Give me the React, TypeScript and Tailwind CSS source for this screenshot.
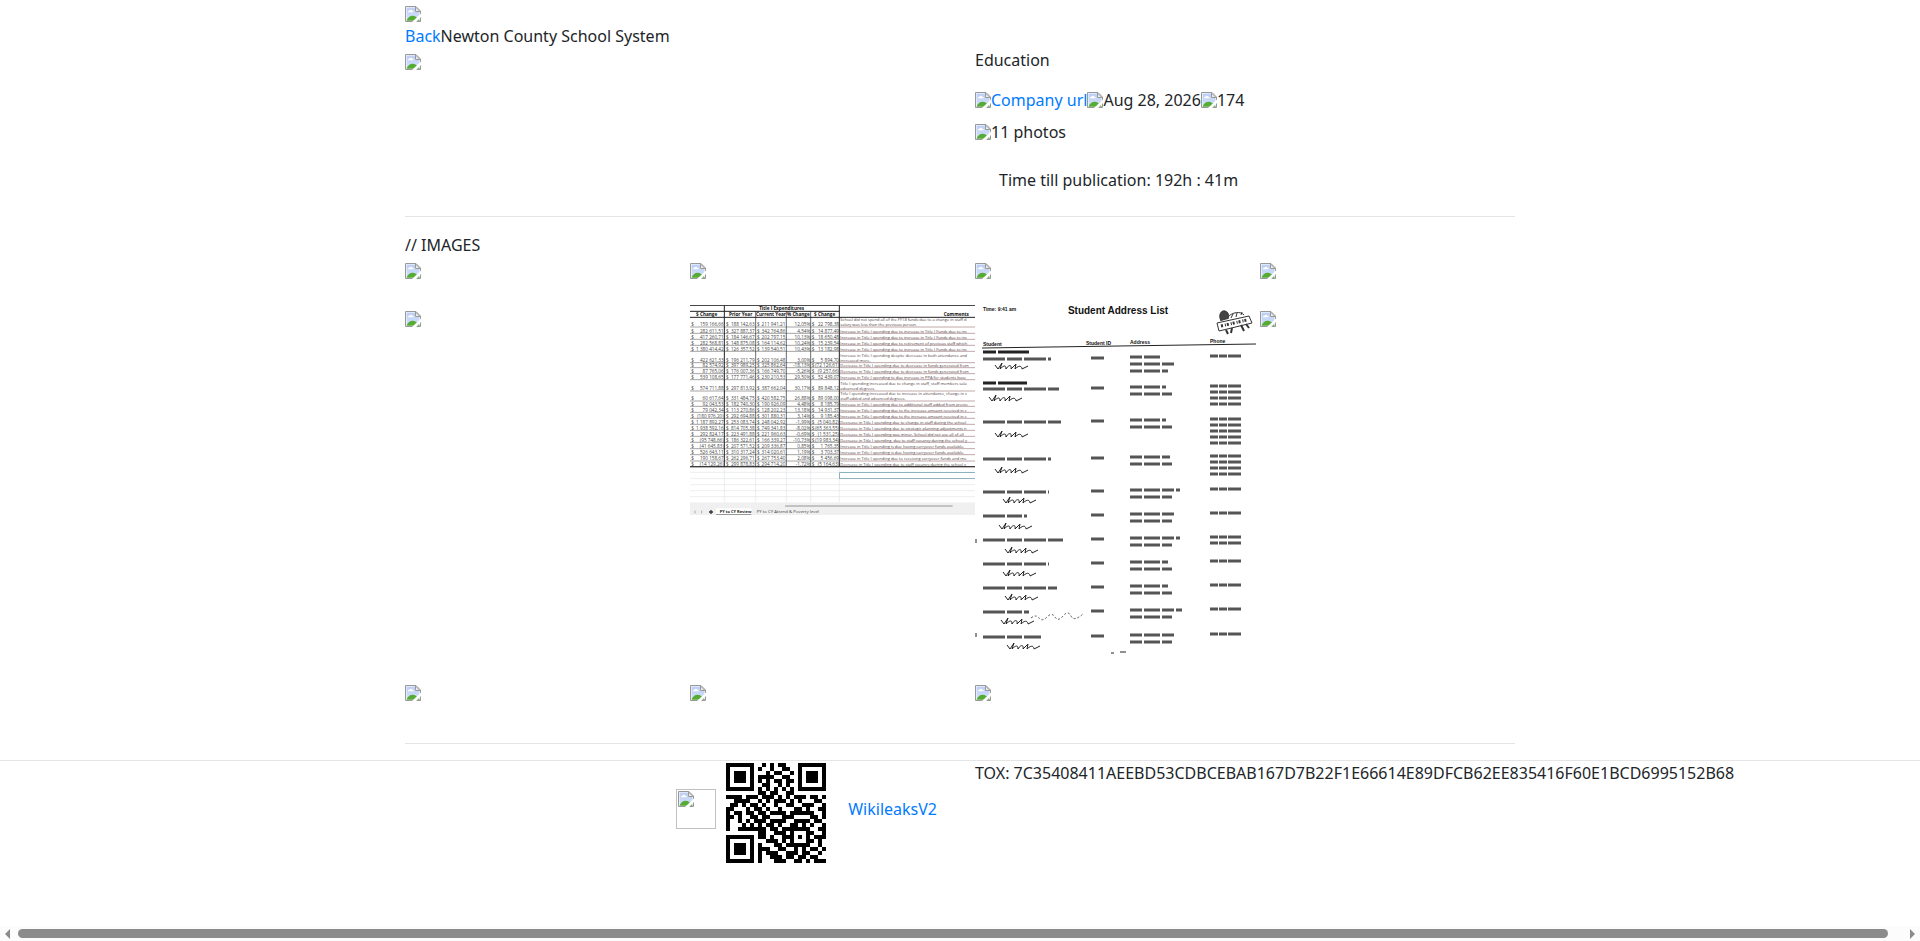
const GALLERY: string[][] = [
  ["broken", "broken", "broken", "broken"],
  ["broken", "sheet", "list", "broken"],
  ["broken", "broken", "broken"],
];

const SHEET_ROWS = [
  { y: 105, a: "159 166,66", b: "188 142,63", c: "211 941,21", d: "12,05%", e: "22 798,38", t: ["School did not spend all of the FY18 funds due to a change in staff d", "salary was less than the previous person."] },
  { y: 124, a: "282 611,51", b: "327 887,37", c: "342 764,86", d: "4,54%", e: "14 877,49", t: ["Increase in Title I spending due to increase in Title I Funds due to inc"] },
  { y: 142, a: "417 260,71", b: "184 146,67", c: "202 797,15", d: "10,13%", e: "18 650,48", t: ["Increase in Title I spending due to increase in Title I Funds due to inc"] },
  { y: 160, a: "282 568,81", b: "148 875,08", c: "164 114,62", d: "10,24%", e: "15 239,54", t: ["Increase in Title I spending due to retirement of previous staff which"] },
  { y: 178, a: "1 380 414,42", b: "126 357,52", c: "139 540,51", d: "10,43%", e: "13 182,98", t: ["Increase in Title I spending due to increase in Title I Funds due to inc"] },
  { y: 212, a: "422 621,33", b: "196 211,79", c: "202 106,48", d: "3,00%", e: "5 894,70", t: ["Increase in Title I spending despite decrease in both attendance and", "increased more."] },
  { y: 227, a: "82 574,92", b: "397 989,25", c: "325 862,64", d: "-18,13%", e: "(72 126,61)", t: ["Decrease in Title I spending due to decrease in funds generated from"] },
  { y: 245, a: "87 765,06", b: "176 007,36", c: "166 749,70", d: "-5,26%", e: "(9 257,66)", t: ["Decrease in Title I spending due to decrease in funds generated from"] },
  { y: 263, a: "539 108,65", b: "177 771,46", c: "230 210,53", d: "29,50%", e: "52 439,07", t: ["Increase in Title I spending to due increase in PPA for students base"] },
  { y: 297, a: "574 711,88", b: "297 813,92", c: "387 662,04", d: "30,17%", e: "89 848,12", t: ["Title I spending increased due to change in staff, staff members sala", "advanced degrees."] },
  { y: 327, a: "60 617,64", b: "331 484,75", c: "420 582,75", d: "26,88%", e: "89 098,00", t: ["Title I spending increased due to increase in attendance, change in s", "staff added and advanced degrees."] },
  { y: 343, a: "92 043,53", b: "182 740,30", c: "190 926,09", d: "4,48%", e: "8 185,79", t: ["Increase in Title I spending due to additional staff added from previo"] },
  { y: 361, a: "79 042,34", b: "113 270,86", c: "128 202,23", d: "13,18%", e: "14 931,37", t: ["Increase in Title I spending due to the increase amount received in c"] },
  { y: 379, a: "(180 976,20)", b: "292 694,88", c: "301 880,31", d: "3,14%", e: "9 185,43", t: ["Increase in Title I spending due to the increase amount received in c"] },
  { y: 397, a: "1 187 892,27", b: "253 083,74", c: "248 042,92", d: "-1,99%", e: "(5 040,82)", t: ["Decrease in Title I spending due to change in staff during the school"] },
  { y: 415, a: "1 938 592,16", b: "814 705,38", c: "749 341,83", d: "-8,02%", e: "(65 363,55)", t: ["Decrease in Title I spending due to strategic planning adjustments n"] },
  { y: 433, a: "292 824,17", b: "223 491,88", c: "221 960,63", d: "-0,69%", e: "(1 531,25)", t: ["Decrease in Title I spending was minor.  School did not use all of all"] },
  { y: 451, a: "(95 748,66)", b: "186 322,61", c: "166 339,27", d: "-10,73%", e: "(19 983,34)", t: ["Decrease in Title I spending, due to staff vacancy during the school y"] },
  { y: 470, a: "(41 645,83)", b: "207 571,52", c: "209 336,87", d: "0,85%", e: "1 765,35", t: ["Increase in Title I spending is due having carryover funds available."] },
  { y: 488, a: "526 643,11", b: "310 317,24", c: "314 020,61", d: "1,19%", e: "3 703,37", t: ["Increase in Title I spending is due having carryover funds available."] },
  { y: 507, a: "190 158,67", b: "262 296,71", c: "267 753,40", d: "2,08%", e: "5 456,69", t: ["Increase in Title I spending due to receiving carryover funds and mo"] },
  { y: 525, a: "(14 129,26)", b: "299 878,83", c: "294 714,20", d: "-1,72%", e: "(5 164,63)", t: ["Decrease in Title I spending due to staff vacancy during the school y"] },
];

// y of the entry, lines in the name / address / phone columns, note position
const LIST_ROWS = [
  { y: 53, name: 68, addr: [30, 46, 38], phone: 1, note: [12, 60] },
  { y: 83, name: 76, addr: [36, 42], phone: 4, note: [6, 92] },
  { y: 116, name: 78, addr: [36, 42], phone: 5, note: [12, 128] },
  { y: 153, name: 68, addr: [40, 42], phone: 4, note: [12, 164] },
  { y: 186, name: 66, addr: [50, 42], phone: 1, note: [20, 194] },
  { y: 210, name: 44, addr: [44, 42], phone: 1, note: [16, 220] },
  { y: 234, name: 80, addr: [50, 42], phone: 2, note: [22, 244] },
  { y: 258, name: 66, addr: [38, 42], phone: 1, note: [20, 267] },
  { y: 282, name: 74, addr: [38, 42], phone: 1, note: [22, 291] },
  { y: 306, name: 46, addr: [52, 42], phone: 1, note: [18, 315] },
  { y: 331, name: 58, addr: [46, 42], phone: 1, note: [24, 340] },
];

const CODE = [
  "1111111001010110001111111",
  "1000001010010011001000001",
  "1011101000101100101011101",
  "1011101011110011001011101",
  "1011101010101101101011101",
  "1000001001100101001000001",
  "1111111010101010101111111",
  "0000000011011001100000000",
  "1111011101110101011101101",
  "0011110010101110101000110",
  "0110101101001001100111001",
  "1100010110100100011010011",
  "1011011011011110111111001",
  "1101001101100011100001101",
  "1001010111011110011110110",
  "1000101010110100110101001",
  "1001111111011011111110011",
  "0000000011001110100011001",
  "1111111011010011101010111",
  "1000001000111010100011010",
  "1011101010001101111110010",
  "1011101011100110010101101",
  "1011101010111001110110010",
  "1000001010011101101101100",
  "1111111010001110011010111",
];

function BrokenImage() {
  return (
    <svg viewBox="0 0 16 16" className="size-4 shrink-0" aria-hidden="true">
      <defs>
        <linearGradient id="sky" x1="0" y1="0" x2="0" y2="1">
          <stop offset="0" stopColor="#bccff5" />
          <stop offset="1" stopColor="#d3e0fa" />
        </linearGradient>
      </defs>
      <path d="M.5.5h10.500l4.500 4.500v10.500H.5z" fill="#fff" stroke="#999" />
      <path d="M1.500 1.500H10v4.500h4.500v8.500h-13z" fill="url(#sky)" />
      <path d="M3 6.200c-.1-1.200.8-1.700 1.500-1.500.4-1.400 2.300-1.400 2.700 0 1-.2 1.600.6 1.500 1.500z" fill="#fff" />
      <path d="M1.500 14.800c1.300-3.300 3.500-5 6-5 2.800 0 5.500 2 7.500 5z" fill="#56ab34" />
      <path d="M10.500 1v4.500H15z" fill="#eee" stroke="#999" />
      <path d="M16 7.500v3.500L11.500 15.500V16H7z" fill="#fff" />
    </svg>
  );
}

function SheetThumb() {
  return (
    <svg viewBox="30 45 855 630" className="w-full" fontFamily="Open Sans, sans-serif" fontSize="14" fill="#444" role="img" aria-label="Spreadsheet">
      <g stroke="#e3e6ea" strokeWidth="2">
        <path d="M30 547H885M30 566H885M30 584H885M30 602H885M30 620H885" />
        <path d="M133 530V636M227 530V636M319 530V636M392 530V636M478 530V636" />
      </g>
      <g fontWeight="700" fontSize="14" fill="#111" textAnchor="middle">
        <text x="305" y="60">Title I Expenditures</text>
        <text x="80" y="79">$ Change</text>
        <text x="182" y="79">Prior Year</text>
        <text x="273" y="79">Current Year</text>
        <text x="355" y="79">% Change</text>
        <text x="434" y="79">$ Change</text>
        <text x="829" y="79">Comments</text>
      </g>
      {SHEET_ROWS.map((r) => (
        <g key={r.y}>
          <text x="34" y={r.y + 4}>$</text>
          <text x="131" y={r.y + 4} textAnchor="end">{r.a}</text>
          <text x="138" y={r.y + 4}>$</text>
          <text x="224" y={r.y + 4} textAnchor="end">{r.b}</text>
          <text x="231" y={r.y + 4}>$</text>
          <text x="316" y={r.y + 4} textAnchor="end">{r.c}</text>
          <text x="391" y={r.y + 4} textAnchor="end">{r.d}</text>
          <text x="395" y={r.y + 4}>$</text>
          <text x="477" y={r.y + 4} textAnchor="end">{r.e}</text>
          {r.t.map((line, i) => (
            <text key={line} x="481" y={r.y + 4 - (r.t.length - 1 - i) * 15} fontSize="12" fill="#4c3a3c">
              {line}
            </text>
          ))}
          <path d={`M30 ${r.y + 6}H478`} stroke="#777" strokeWidth="2" />
          <path d={`M480 ${r.y + 6}H885`} stroke="#a07c80" strokeWidth="2" />
        </g>
      ))}
      <g stroke="#222" strokeWidth="3" fill="none">
        <path d="M30 46H885M30 64H478M30 82H885M30 530H885" />
        <path d="M133 46V530M478 46V530" />
        <path d="M227 64V530M319 64V530M392 64V530" strokeWidth="2" />
      </g>
      <rect x="479" y="548" width="420" height="18" fill="#fff" stroke="#5a8fa3" strokeWidth="2" />
      <rect x="30" y="637" width="855" height="38" fill="#f0f0f0" />
      <path d="M315 648H818" stroke="#b5b5b5" strokeWidth="5" />
      <path d="M108 655h106v20H108z" fill="#fff" />
      <path d="M108 675H214" stroke="#333" strokeWidth="3" />
      <path d="M87 666h12M93 660v12" stroke="#333" strokeWidth="4" />
      <path d="M45 662v8M65 662v8" stroke="#aaa" strokeWidth="3" />
      <text x="119" y="670" fontSize="12" fontWeight="700" fill="#222">PY to CY Review</text>
      <text x="230" y="670" fontSize="13">PY to CY Attend &amp; Poverty level</text>
    </svg>
  );
}

function ListThumb() {
  return (
    <svg viewBox="0 0 285 350" className="w-full" fontFamily="Liberation Sans, sans-serif" fontWeight="700" fill="#111" role="img" aria-label="Student Address List">
      <text x="143" y="9" fontSize="10" textAnchor="middle">Student Address List</text>
      <g fontSize="5">
        <text x="8" y="6">Time: 9:41 am</text>
        <text x="8" y="41">Student</text>
        <text x="111" y="40">Student ID</text>
        <text x="155" y="39">Address</text>
        <text x="235" y="38">Phone</text>
      </g>
      <path d="M7 43L281 39" stroke="#222" fill="none" />
      <g stroke="#333" fill="none">
        <path d="M242 18l32-7 3 7-33 8z" fill="#fff" />
        <path d="M246 16c-3-6 0-11 4-10s4 5 3 8" fill="#444" />
        <path d="M253 12c4-5 13-6 16-2M256 13l2-4M261 12l1-4M266 10l1-3" />
        <path d="M246 21l26-6" strokeWidth="3" strokeDasharray="2 2 1 1" />
        <path d="M251 25l2 4M257 23l-1 5M266 20l3 6M271 19l3 4" strokeWidth="2" />
      </g>
      {/* entries are masked: only the shape of the lines is drawn */}
      <g stroke="#555" strokeWidth="3" fill="none">
        <path d="M8 47h46M8 78h44" stroke="#222" strokeDasharray="13 2 31" />
        {LIST_ROWS.map((r) => (
          <g key={r.y}>
            <path d={`M8 ${r.y + 1}h${r.name}`} strokeDasharray="22 2 15 2" />
            <path d={`M116 ${r.y}h13`} />
            {r.addr.map((w, i) => (
              <path key={i} d={`M155 ${r.y - 1 + i * 7}h${w}`} strokeDasharray="12 2 16 2" />
            ))}
            {Array.from({ length: r.phone }, (_, i) => (
              <path key={i} d={`M235 ${r.y - 2 + i * 6}h31`} strokeDasharray="8 1 8 1 13" />
            ))}
            <path
              d={`M${r.note[0] + 8} ${r.note[1]}l3 4 4-6-2 6c4-4 6-4 6 0 3-5 6-4 5 0l5-5-1 5c5-5 7-2 7 0l6-3`}
              stroke="#222"
              strokeWidth="1"
            />
          </g>
        ))}
        <path d="M56 313q5-4 8 0t8-1 8 0 8-1 8 0 12-2" strokeWidth="1" strokeDasharray="2 2" />
      </g>
      <path d="M1 234v4M1 328v4M136 348h3M145 347h6" stroke="#222" />
    </svg>
  );
}

function Thumb({ kind }: { kind: string }) {
  if (kind === "sheet") return <SheetThumb />;
  if (kind === "list") return <ListThumb />;
  return (
    <div className="flex h-6 items-end pb-0.5">
      <BrokenImage />
    </div>
  );
}

function CodeImage() {
  return (
    <svg viewBox="0 0 25 25" className="size-[100px]" shapeRendering="crispEdges" role="img" aria-label="Code">
      {CODE.map((row, y) =>
        row.split("").map((c, x) => c === "1" && <rect key={`${x}-${y}`} x={x} y={y} width="1" height="1" />)
      )}
    </svg>
  );
}

function App() {
  return (
    <div className="flex min-h-screen flex-col overflow-x-hidden bg-white font-['Noto_Sans',sans-serif] text-base text-[#212529]">
      <main className="mx-auto w-full max-w-[1140px] px-[15px]">
        <Thumb kind="broken" />
        <div>
          <a href="#" className="text-[#007bff]">Back</a>Newton County School System
        </div>
        <div className="grid grid-cols-2 gap-[30px]">
          <Thumb kind="broken" />
          <div>
            <div>Education</div>
            <div className="mt-4 flex items-center">
              <BrokenImage />
              <a href="#" className="text-[#007bff]">Company url</a>
              <BrokenImage />
              <span>Aug 28, 2026</span>
              <BrokenImage />
              <span>174</span>
            </div>
            <div className="mt-2 flex items-center">
              <BrokenImage />
              <span>11 photos</span>
            </div>
            <div className="p-6">Time till publication: 192h : 41m</div>
          </div>
        </div>
        <hr className="mb-4 border-black/10" />
        <div>// IMAGES</div>
        {GALLERY.map((row, i) => (
          <div key={i} className="-mr-[30px] grid grid-cols-4 pb-6">
            {row.map((kind, j) => (
              <Thumb key={j} kind={kind} />
            ))}
          </div>
        ))}
        <hr className="my-4 border-black/10" />
      </main>
      <footer className="grid grid-cols-2 border-t border-black/10">
        <div className="flex items-center justify-end pt-0.5 pr-[23px]">
          <div className="mr-2.5 mb-2 size-10 border border-[#c0c0c0] p-px">
            <BrokenImage />
          </div>
          <CodeImage />
          <a href="#" className="mb-2 ml-[22px] text-[#007bff]">WikileaksV2</a>
        </div>
        <div className="pl-[15px] whitespace-nowrap">
          TOX: 7C35408411AEEBD53CDBCEBAB167D7B22F1E66614E89DFCB62EE835416F60E1BCD6995152B68
        </div>
      </footer>
      <div className="mt-auto flex h-[15px] items-center bg-[#fcfcfc] px-[5px]">
        <svg viewBox="0 0 5 10" className="h-2.5 w-[5px]" fill="#8b8b8b">
          <path d="M5 0v10L0 5z" />
        </svg>
        <div className="mr-[22px] ml-2 h-[9px] flex-1 rounded-full bg-[#8b8b8b]" />
        <svg viewBox="0 0 5 10" className="h-2.5 w-[5px]" fill="#8b8b8b">
          <path d="M0 0v10l5-5z" />
        </svg>
      </div>
    </div>
  );
}

export default App;
